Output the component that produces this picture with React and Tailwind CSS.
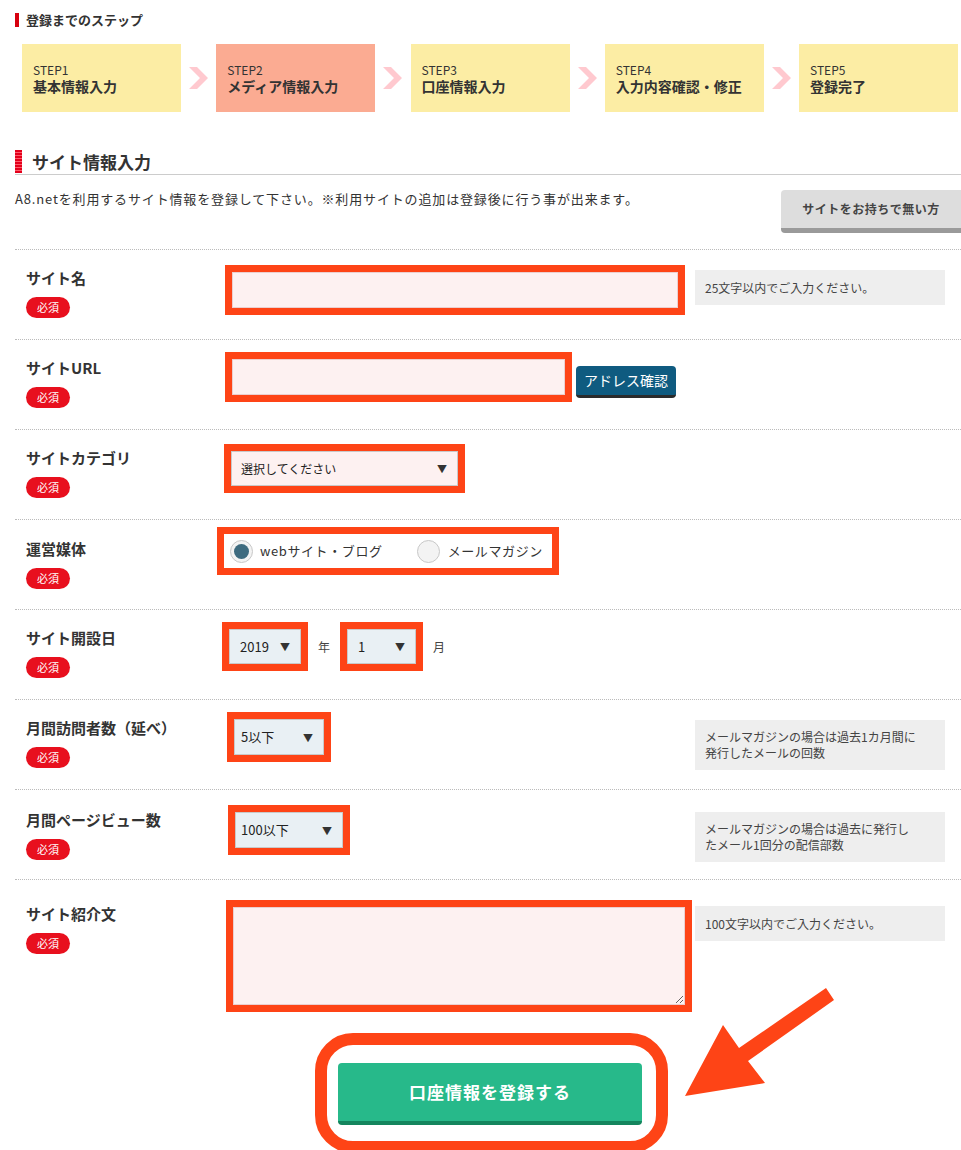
import React from 'react';

const steps = [
  { no: 'STEP1', title: '基本情報入力', active: false },
  { no: 'STEP2', title: 'メディア情報入力', active: true },
  { no: 'STEP3', title: '口座情報入力', active: false },
  { no: 'STEP4', title: '入力内容確認・修正', active: false },
  { no: 'STEP5', title: '登録完了', active: false },
];

const Chevron = () => (
  <div className="flex w-[35.25px] shrink-0 items-center justify-center">
    <svg width="19" height="22" viewBox="0 0 19 22">
      <polygon points="0,0 8,0 19,11 8,22 0,22 11,11" fill="#ffc9cf" />
    </svg>
  </div>
);

const Badge = () => (
  <span className="mt-[9px] flex h-[21px] w-[44px] items-center justify-center rounded-full bg-[#e8101e] text-[11px] text-white">
    必須
  </span>
);

const Hint = ({ className, children }) => (
  <div className={`w-[250px] shrink-0 bg-[#eeeeee] px-[10px] text-[12px] text-[#444] ${className}`}>
    {children}
  </div>
);

const Row = ({ label, labelPad, height, children, hint }) => (
  <div className={`flex items-start border-t border-dotted border-[#bbbbbb] ${height}`}>
    <div className={`w-[200px] shrink-0 pl-[11px] ${labelPad}`}>
      <p className="text-[15px] leading-[20px] font-bold text-[#333]">{label}</p>
      <Badge />
    </div>
    <div className="w-[480px] shrink-0">{children}</div>
    {hint}
  </div>
);

const FakeSelect = ({ value, className = '', pad = 'pl-[11px]', bg }) => (
  <div className={`flex h-full items-center justify-between border border-[#c9c9c9] pr-[10px] text-[13px] text-[#222] ${pad} ${bg} ${className}`}>
    <span>{value}</span>
    <span className="text-[10px] text-[#333]">▼</span>
  </div>
);

export default function App() {
  return (
    <div className="relative h-[1150px] w-[961px] overflow-hidden bg-white pl-[15px] font-['Noto_Sans_CJK_JP','Noto_Sans',sans-serif] text-[#333]">
      {/* 登録までのステップ */}
      <div className="flex items-center gap-[7px] pt-[13px]">
        <span className="h-[14px] w-[4px] bg-[#d7000f]" />
        <h2 className="text-[13px] leading-[14px] font-bold text-[#333]">登録までのステップ</h2>
      </div>

      <div className="mt-[17px] ml-[7px] flex">
        {steps.map((s, i) => (
          <React.Fragment key={s.no}>
            {i > 0 && <Chevron />}
            <div
              className={`flex h-[68px] w-[159px] shrink-0 flex-col justify-center pt-[1px] pl-[11px] ${
                s.active ? 'bg-[#fbab92]' : 'bg-[#fceda4]'
              }`}
            >
              <span className="block text-[12px] leading-[14px] text-[#333]">{s.no}</span>
              <span className="mt-[1px] block text-[14px] leading-[16px] font-bold text-[#333]">{s.title}</span>
            </div>
          </React.Fragment>
        ))}
      </div>

      {/* サイト情報入力 */}
      <div className="mt-[38px] flex items-center gap-[10px] border-b border-[#cccccc] pb-[1px]">
        <span className="h-[23px] w-[7px] bg-[repeating-linear-gradient(to_bottom,#e3001b_0px,#e3001b_2px,#ff5a6a_2px,#ff5a6a_3px)]" />
        <h2 className="text-[17px] leading-[23px] font-bold text-[#333]">サイト情報入力</h2>
      </div>

      <div className="mt-[15px] flex items-start justify-between">
        <p className="pt-[1px] text-[13px] leading-[16px] tracking-[0.85px] text-[#333]">
          A8.netを利用するサイト情報を登録して下さい。※利用サイトの追加は登録後に行う事が出来ます。
        </p>
        <button className="h-[43px] w-[180px] rounded-tl-[4px] rounded-bl-[4px] border-b-[5px] border-[#9a9a9a] bg-[#dddddd] text-[12px] font-bold tracking-[0.5px] text-[#444]">
          サイトをお持ちで無い方
        </button>
      </div>

      <div className="mt-[16px]">
        {/* サイト名 */}
        <Row
          label="サイト名"
          labelPad="pt-[18px]"
          height="h-[90px]"
          hint={<Hint className="mt-[20px] py-[9px] leading-[17px]">25文字以内でご入力ください。</Hint>}
        >
          <div className="mt-[15px] ml-[10px] h-[50px] w-[460px] border-[7px] border-[#fe4416]">
            <div className="h-full w-full border border-[#ebcfcf] bg-[#fdf1f1]" />
          </div>
        </Row>

        {/* サイトURL */}
        <Row label="サイトURL" labelPad="pt-[18px]" height="h-[90px]">
          <div className="mt-[12px] ml-[10px] flex items-start">
            <div className="h-[50px] w-[347px] border-[7px] border-[#fe4416]">
              <div className="h-full w-full border border-[#ebcfcf] bg-[#fdf1f1]" />
            </div>
            <button className="mt-[14px] ml-[4px] h-[32px] w-[100px] rounded-[4px] border-b-[3px] border-[#2b2b2b] bg-[#0f5b80] text-[14px] text-white">
              アドレス確認
            </button>
          </div>
        </Row>

        {/* サイトカテゴリ */}
        <Row label="サイトカテゴリ" labelPad="pt-[18px]" height="h-[90px]">
          <div className="mt-[14px] ml-[9px] h-[49px] w-[241px] border-[7px] border-[#fe4416]">
            <FakeSelect value="選択してください" pad="pl-[9px]" bg="bg-[#fdf1f1]" className="!text-[12px]" />
          </div>
        </Row>

        {/* 運営媒体 */}
        <Row label="運営媒体" labelPad="pt-[19px]" height="h-[90px]">
          <div className="mt-[7px] ml-[2px] flex h-[48px] w-[342px] items-center border-[7px] border-[#fe4416] bg-white pl-[6px]">
            <span className="flex h-[23px] w-[23px] items-center justify-center rounded-full border border-[#c8c8c8] bg-[#f3f3f3]">
              <span className="h-[15px] w-[15px] rounded-full bg-[#3e6b7f]" />
            </span>
            <span className="ml-[7px] text-[13px] tracking-[0.6px] text-[#333]">webサイト・ブログ</span>
            <span className="ml-[34px] h-[23px] w-[23px] rounded-full border border-[#c8c8c8] bg-[#f3f3f3]" />
            <span className="ml-[8px] text-[13px] tracking-[0.6px] text-[#333]">メールマガジン</span>
          </div>
        </Row>

        {/* サイト開設日 */}
        <Row label="サイト開設日" labelPad="pt-[18px]" height="h-[90px]">
          <div className="mt-[12px] ml-[7px] flex items-center">
            <div className="h-[49px] w-[86px] border-[7px] border-[#fe4416]">
              <FakeSelect value="2019" pad="pl-[10px]" bg="bg-[#e9f0f4]" />
            </div>
            <span className="ml-[10px] text-[12px] text-[#444]">年</span>
            <div className="ml-[10px] h-[49px] w-[83px] border-[7px] border-[#fe4416]">
              <FakeSelect value="1" pad="pl-[10px]" bg="bg-[#e9f0f4]" />
            </div>
            <span className="ml-[10px] text-[12px] text-[#444]">月</span>
          </div>
        </Row>

        {/* 月間訪問者数 */}
        <Row
          label="月間訪問者数（延べ）"
          labelPad="pt-[18px]"
          height="h-[90px]"
          hint={
            <Hint className="mt-[20px] py-[9px] leading-[16px]">
              メールマガジンの場合は過去1カ月間に
              <br />
              発行したメールの回数
            </Hint>
          }
        >
          <div className="mt-[12px] ml-[12px] h-[50px] w-[104px] border-[7px] border-[#fe4416]">
            <FakeSelect value="5以下" pad="pl-[6px]" bg="bg-[#e9f0f4]" />
          </div>
        </Row>

        {/* 月間ページビュー数 */}
        <Row
          label="月間ページビュー数"
          labelPad="pt-[20px]"
          height="h-[90px]"
          hint={
            <Hint className="mt-[22px] py-[9px] leading-[16px]">
              メールマガジンの場合は過去に発行し
              <br />
              たメール1回分の配信部数
            </Hint>
          }
        >
          <div className="mt-[15px] ml-[13px] h-[50px] w-[122px] border-[7px] border-[#fe4416]">
            <FakeSelect value="100以下" pad="pl-[5px]" bg="bg-[#e9f0f4]" />
          </div>
        </Row>

        {/* サイト紹介文 */}
        <Row
          label="サイト紹介文"
          labelPad="pt-[24px]"
          height="h-[134px]"
          hint={<Hint className="mt-[26px] py-[9px] leading-[17px]">100文字以内でご入力ください。</Hint>}
        >
          <div className="mt-[20px] ml-[11px] h-[112px] w-[466px] border-[7px] border-[#fe4416]">
            <textarea className="block h-full w-full border border-[#ebcfcf] bg-[#fdf1f1] outline-none" />
          </div>
        </Row>
      </div>

      {/* 登録ボタン */}
      <div className="mt-[20px] ml-[300px] h-[120px] w-[353px] rounded-[38px] border-[12px] border-[#fe4416] pt-[18px] pl-[11px]">
        <button className="h-[62px] w-[304px] rounded-[4px] border-b-[4px] border-[#14855d] bg-[#27b98a] text-[17px] font-bold tracking-[1px] text-white">
          口座情報を登録する
        </button>
      </div>

      {/* annotation arrow */}
      <svg className="absolute top-[970px] left-[650px]" width="200" height="140" viewBox="0 0 200 140">
        <polygon points="35,126 73,55 89,78 176,18 184,30 98,91 115,113" fill="#fe4416" />
      </svg>
    </div>
  );
}
